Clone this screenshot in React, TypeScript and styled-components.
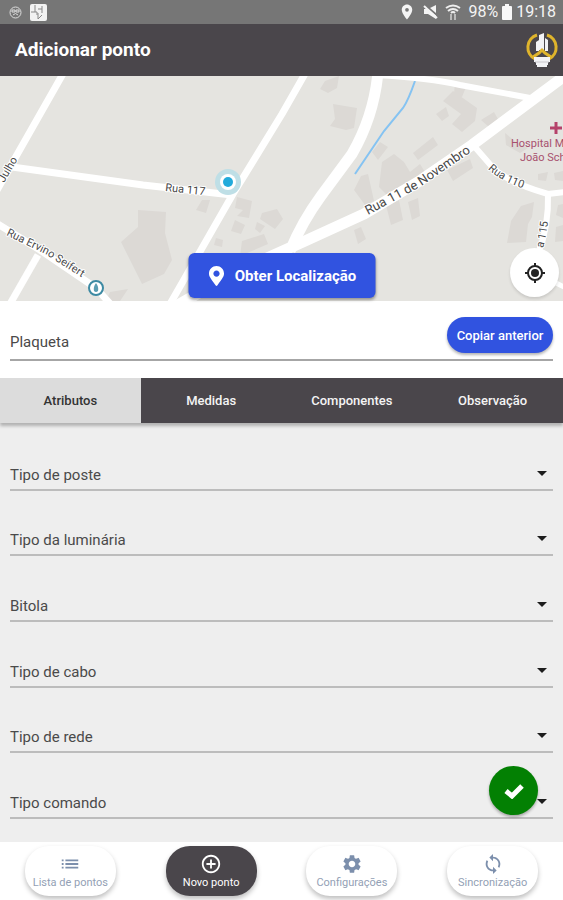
import React, { useState } from 'react';
import styled, { createGlobalStyle } from 'styled-components';
import {
  MdAddCircleOutline,
  MdList,
  MdLocationOn,
  MdSettings,
  MdSync,
} from 'react-icons/md';
import { FaMapMarkerAlt } from 'react-icons/fa';

const GlobalStyle = createGlobalStyle`
  *, *::before, *::after { box-sizing: border-box; }
  body { margin: 0; background: #fff; font-family: Roboto, "Liberation Sans", sans-serif; }
  button, input, select { font-family: inherit; }
`;

const Screen = styled.div`
  display: flex;
  flex-direction: column;
  min-height: 100vh;
`;

const StatusBar = styled.div`
  display: flex;
  align-items: center;
  justify-content: space-between;
  height: 24px;
  padding: 0 7px 0 9px;
  background: #767676;
  color: #f4f4f4;
`;

const StatusGroup = styled.div<{ $gap: number }>`
  display: flex;
  align-items: center;
  gap: ${(p) => p.$gap}px;
`;

const StatusText = styled.span`
  font-size: 16px;
  line-height: 24px;
`;

const Clock = styled.span`
  display: flex;
  align-items: center;
  gap: 4px;
`;

const Header = styled.header`
  display: flex;
  align-items: center;
  justify-content: space-between;
  height: 52px;
  padding: 0 4px 0 15px;
  background: #4a464b;
`;

const Title = styled.h1`
  margin: 0;
  color: #fff;
  font-size: 19px;
  font-weight: 700;
  line-height: 24px;
`;

const MapArea = styled.section`
  position: relative;
  height: 225px;
  background: #e5e4e0;
`;

const MapDrawing = styled.svg`
  display: block;
  width: 100%;
  height: 100%;
`;

const LocateButton = styled.button`
  position: absolute;
  left: 50%;
  bottom: 3px;
  transform: translateX(-50%);
  display: flex;
  align-items: center;
  justify-content: center;
  gap: 8px;
  width: 187px;
  height: 45px;
  padding: 0;
  border: 0;
  border-radius: 6px;
  background: #3153e0;
  color: #fff;
  font-size: 15px;
  font-weight: 700;
  white-space: nowrap;
  box-shadow: 0 2px 3px rgba(0, 0, 0, 0.35);
`;

const RoundButton = styled.button<{ $tone: 'light' | 'green' }>`
  position: absolute;
  display: flex;
  align-items: center;
  justify-content: center;
  width: 49px;
  height: 49px;
  padding: 0;
  border: 0;
  border-radius: 50%;
  background: ${(p) => (p.$tone === 'green' ? '#038003' : '#fff')};
  color: ${(p) => (p.$tone === 'green' ? '#fff' : '#222')};
  right: ${(p) => (p.$tone === 'green' ? 25 : 4)}px;
  bottom: ${(p) => (p.$tone === 'green' ? 27 : 4)}px;
  box-shadow: 0 2px 3px rgba(0, 0, 0, ${(p) => (p.$tone === 'green' ? 0.3 : 0.12)});
`;

const PlateSection = styled.section`
  display: grid;
  height: 77px;
  padding: 0 10px 17px;
  background: #fff;
`;

const PlateInput = styled.input`
  grid-area: 1 / 1;
  width: 100%;
  padding: 22px 120px 0 0;
  border: 0;
  border-bottom: 2px solid #a6a6a6;
  border-radius: 0;
  outline: 0;
  background: transparent;
  color: #444;
  font-size: 15px;
`;

const FieldLabel = styled.label<{ $filled: boolean }>`
  grid-area: 1 / 1;
  align-self: end;
  justify-self: start;
  margin-bottom: ${(p) => (p.$filled ? 28 : 4)}px;
  color: #4a4a4a;
  font-size: ${(p) => (p.$filled ? 12 : 15)}px;
  line-height: 20px;
  pointer-events: none;
`;

const PlateLabel = styled(FieldLabel)`
  margin-bottom: ${(p) => (p.$filled ? 28 : 9)}px;
`;

const CopyButton = styled.button`
  grid-area: 1 / 1;
  align-self: end;
  justify-self: end;
  width: 106px;
  height: 36px;
  margin-bottom: 8px;
  padding: 0;
  border: 0;
  border-radius: 18px;
  background: #3153e0;
  color: #fff;
  font-size: 13px;
  font-weight: 500;
  white-space: nowrap;
  box-shadow: 0 2px 3px rgba(0, 0, 0, 0.3);
`;

const TabBar = styled.div`
  position: relative;
  z-index: 1;
  display: grid;
  grid-template-columns: repeat(4, 1fr);
  height: 45px;
  background: #4a464b;
  box-shadow: 0 3px 3px rgba(0, 0, 0, 0.25);
`;

const Tab = styled.button<{ $active: boolean }>`
  padding: 0;
  border: 0;
  background: ${(p) => (p.$active ? '#dcdcdc' : 'transparent')};
  color: ${(p) => (p.$active ? '#333' : '#f4f4f4')};
  font-size: 13px;
  font-weight: 500;
`;

const Panel = styled.main`
  position: relative;
  display: flex;
  flex: 1;
  flex-direction: column;
  padding: 2px 10px 23px;
  background: #eee;
`;

const Field = styled.div`
  display: grid;
  flex: 1;
  min-height: 56px;
  border-bottom: 2px solid #bcbcbc;
`;

const Select = styled.select`
  grid-area: 1 / 1;
  width: 100%;
  padding: 30px 24px 0 0;
  border: 0;
  outline: 0;
  appearance: none;
  background: transparent;
  color: #444;
  font-size: 15px;
`;

const Caret = styled.svg`
  grid-area: 1 / 1;
  align-self: end;
  justify-self: end;
  width: 10px;
  height: 5px;
  margin: 0 6px 13px 0;
  pointer-events: none;
`;

const NavBar = styled.nav`
  display: grid;
  grid-template-columns: repeat(4, 1fr);
  justify-items: center;
  height: 58px;
  padding-top: 4px;
  background: #fff;
`;

const NavButton = styled.button<{ $active: boolean }>`
  display: flex;
  flex-direction: column;
  align-items: center;
  width: 91px;
  height: 50px;
  padding: 7px 0 0;
  border: 0;
  border-radius: 24px;
  background: ${(p) => (p.$active ? '#4a464b' : '#fff')};
  color: ${(p) => (p.$active ? '#fff' : '#7c8fac')};
  box-shadow: 0 3px 5px rgba(0, 0, 0, 0.25);
`;

const NavLabel = styled.span<{ $active: boolean }>`
  color: ${(p) => (p.$active ? '#fff' : '#939fb5')};
  font-size: 11px;
  line-height: 16px;
  white-space: nowrap;
`;

const roads: { d: string; w: number }[] = [
  { d: 'M64 -4 L14 84 L-4 116', w: 7 },
  { d: 'M12 91 L143 109 L232 119', w: 7 },
  { d: 'M306 -4 L282 38 L233 118 L170 228', w: 7 },
  { d: 'M-4 147 L40 174 L96 212 L114 232', w: 7 },
  { d: 'M38 179 L10 228', w: 7 },
  { d: 'M378 -4 Q374 40 352 78 L321 120 Q302 146 290 175', w: 11 },
  { d: 'M570 -4 L472 69 L418 106 L364 138 L305 165 L236 196 L176 230', w: 11 },
  { d: 'M376 -1 Q430 2 460 9 L530 22', w: 6 },
  { d: 'M474 70 L494 93 Q510 107 548 118 L566 116', w: 6 },
  { d: 'M548 118 Q549 150 538 178', w: 6 },
  { d: 'M556 207 L566 212', w: 5 },
];

const buildings =
  'M138 134 L166 136 L165 157 L172 184 L164 198 L142 208 L121 166 L138 151Z ' +
  'M202 124 L210 124 L206 137 L196 134Z M237 121 L252 125 L249 142 L237 140 L243 134 L235 132Z ' +
  'M235 144 L245 149 L241 158 L231 155Z M262 137 L277 133 L283 143 L275 153 L260 143Z M257 146 L265 150 L260 157 L255 153Z ' +
  'M242 165 L264 158 L268 168 L240 180Z M216 162 L223 164 L222 171 L214 169Z M110 216 L128 213 L120 225 L106 225Z ' +
  'M325 5 L339 0 L337 12 L328 17 L320 13Z M333 28 L357 32 L354 52 L346 54 L330 50 L335 43Z ' +
  'M436 38 L446 31 L449 40 L442 45Z M443 25 L453 15 L477 32 L475 45 L462 56 L452 48 L461 38Z M455 7 L466 11 L462 21 L454 18Z ' +
  'M481 44 L494 36 L499 45 L489 51Z M413 77 L433 61 L438 69 L418 84Z M372 76 L380 66 L388 71 L378 84Z ' +
  'M382 86 L394 78 L404 86 L410 96 L420 88 L425 96 L389 121 L379 111Z M361 100 L368 98 L374 125 L365 129 L354 114Z ' +
  'M447 94 L470 83 L473 92 L453 105Z M386 129 L399 124 L403 144 L391 149Z M408 126 L418 122 L420 140 L412 144Z M354 154 L361 151 L366 163 L358 168Z ' +
  'M505 57 L516 66 L528 72 L520 77 L506 69Z M538 98 L548 96 L546 105 L538 104Z M554 97 L563 95 L563 105 L555 104Z ' +
  'M521 130 L534 126 L532 141 L528 148 L526 166 L507 167 L511 145Z M558 129 L563 128 L563 142 L556 139Z M556 151 L563 149 L563 165 L555 166Z';

function StreetMap() {
  return (
    <MapDrawing viewBox="0 0 563 225" preserveAspectRatio="xMidYMid slice" role="img" aria-label="Mapa">
      <path d={buildings} fill="#dcd9d5" />
      <path d="M415 5 Q408 25 403 32 L384 55 L355 98" fill="none" stroke="#85c3f2" strokeWidth="2" />
      {roads.map((r) => (
        <path key={r.d} d={r.d} fill="none" stroke="#fff" strokeWidth={r.w} strokeLinejoin="round" />
      ))}
      <defs>
        <path id="r117" d="M165 115 L230 122" />
        <path id="r11" d="M368 139 L420 111 L480 70" />
        <path id="rErvino" d="M6 159 L45 178 L100 213" />
        <path id="r110" d="M488 93 Q502 107 535 116" />
        <path id="r115" d="M543 172 Q548 155 549 130" />
        <path id="rJulho" d="M4 107 L24 73" />
      </defs>
      <g fill="#484848" fontSize="11" stroke="#fff" strokeWidth="2" paintOrder="stroke" strokeLinejoin="round">
        <text><textPath href="#r117">Rua 117</textPath></text>
        <text fontSize="13"><textPath href="#r11">Rua 11 de Novembro</textPath></text>
        <text><textPath href="#rErvino">Rua Ervino Seifert</textPath></text>
        <text><textPath href="#r110">Rua 110</textPath></text>
        <text><textPath href="#r115">a 115</textPath></text>
        <text><textPath href="#rJulho">Julho</textPath></text>
      </g>
      <circle cx="228" cy="106" r="13" fill="#bfdfe6" />
      <circle cx="228" cy="106" r="8" fill="#fff" />
      <circle cx="228" cy="106" r="5" fill="#22abdb" />
      <circle cx="96" cy="212" r="7" fill="#fff" stroke="#3d8aa3" strokeWidth="2" />
      <path d="M96 207 Q93 211 94 215 Q96 217 98 215 Q99 211 96 207Z" fill="#5b9db2" />
      <path d="M550 52 H562 M556 46 V58" stroke="#b5426a" strokeWidth="3" />
      <g fill="#a8506e" fontSize="11">
        <text x="511" y="71">Hospital M</text>
        <text x="520" y="85">João Sch</text>
      </g>
    </MapDrawing>
  );
}

function Logo() {
  return (
    <svg width="34" height="38" viewBox="0 0 34 38" aria-hidden="true">
      <path d="M12 4 A13 13 0 0 0 10 28 M22 4 A13 13 0 0 1 24 28" fill="none" stroke="#dfb42c" strokeWidth="3" />
      <path d="M11 20 V11 L14 9 V20Z M14 19 V4 L19 2 V19Z M20 20 V7 L23 9 V20Z" fill="#f3f3f6" />
      <path d="M8 26 L14 22 L17 19 L20 22 L26 26" fill="none" stroke="#dfb42c" strokeWidth="3" />
      <path d="M9 26 H25 V31 H23 V34 H22 V36 H12 V34 H11 V31 H9Z" fill="#f3f3f6" />
      <path d="M10 31 H24" stroke="#c9c6cc" />
    </svg>
  );
}

function StatusIcons() {
  return (
    <StatusGroup $gap={8}>
      <svg width="13" height="13" viewBox="0 0 13 13" fill="none" stroke="#ddd" aria-hidden="true">
        <circle cx="6.5" cy="6.5" r="5.5" />
        <path d="M3 4 H6 V6 H3Z M7 4 H10 V6 H7Z M4 9 Q6.5 6 9 9" />
      </svg>
      <svg width="17" height="17" viewBox="0 0 17 17" aria-hidden="true">
        <rect width="17" height="17" rx="2" fill="#f2f2f2" />
        <path d="M5 1 V8 M1 8 H7 M8 5 H12 M12 2 V9 M7 11 V8 M8 9 V15 L12 11" fill="none" stroke="#888" />
      </svg>
    </StatusGroup>
  );
}

function MutedIcon() {
  return (
    <svg width="15" height="16" viewBox="0 0 15 16" aria-hidden="true">
      <path d="M1 5 H5 L13 1 V15 L5 10 H1Z" fill="#f4f4f4" />
      <path d="M2 1 L15 12" stroke="#767676" strokeWidth="2" />
      <path d="M1 2 L14 14" stroke="#f4f4f4" strokeWidth="2" />
    </svg>
  );
}

function WifiIcon() {
  return (
    <svg width="16" height="17" viewBox="0 0 16 17" fill="none" stroke="#eee" strokeWidth="2" aria-hidden="true">
      <path d="M1 4 Q8 -1 15 4 M3 7 Q8 3 13 7 M6 9 Q8 7 10 9" />
      <path d="M6 10 V16 M10 10 V16" stroke="#bbb" />
    </svg>
  );
}

function BatteryIcon() {
  return (
    <svg width="10" height="16" viewBox="0 0 10 16" aria-hidden="true">
      <path d="M3 0 H7 V2 H9 Q10 2 10 3 V15 Q10 16 9 16 H1 Q0 16 0 15 V3 Q0 2 1 2 H3Z" fill="#f8f8f8" />
    </svg>
  );
}

function TargetIcon() {
  return (
    <svg width="20" height="20" viewBox="0 0 20 20" fill="none" stroke="#222" strokeWidth="2" aria-hidden="true">
      <circle cx="10" cy="10" r="7" />
      <circle cx="10" cy="10" r="4" fill="#222" stroke="none" />
      <path d="M10 0 V3 M10 17 V20 M0 10 H3 M17 10 H20" />
    </svg>
  );
}

function CheckIcon() {
  return (
    <svg width="20" height="16" viewBox="0 0 20 16" fill="none" aria-hidden="true">
      <path d="M2 8 L8 13 L18 3" stroke="#fff" strokeWidth="5" />
    </svg>
  );
}

const tabs = ['Atributos', 'Medidas', 'Componentes', 'Observação'];

const fields = [
  { label: 'Tipo de poste', options: ['Concreto', 'Madeira'] },
  { label: 'Tipo da luminária', options: ['Aberta', 'Fechada'] },
  { label: 'Bitola', options: ['10 mm', '16 mm'] },
  { label: 'Tipo de cabo', options: ['Cobre', 'Alumínio'] },
  { label: 'Tipo de rede', options: ['Aérea', 'Subterrânea'] },
  { label: 'Tipo comando', options: ['Individual', 'Grupo'] },
];

const navItems = [
  { label: 'Lista de pontos', icon: <MdList size={22} /> },
  { label: 'Novo ponto', icon: <MdAddCircleOutline size={22} stroke="currentColor" /> },
  { label: 'Configurações', icon: <MdSettings size={22} /> },
  { label: 'Sincronização', icon: <MdSync size={22} /> },
];

function SelectField({ label, options }: { label: string; options: string[] }) {
  const [value, setValue] = useState('');
  const id = label.toLowerCase().replace(/ /g, '-');
  return (
    <Field>
      <Select id={id} value={value} onChange={(e) => setValue(e.target.value)}>
        <option value="" />
        {options.map((o) => (
          <option key={o}>{o}</option>
        ))}
      </Select>
      <FieldLabel htmlFor={id} $filled={value !== ''}>{label}</FieldLabel>
      <Caret viewBox="0 0 10 5" aria-hidden="true">
        <path d="M0 0 H10 L5 5Z" fill="#1c1c1c" />
      </Caret>
    </Field>
  );
}

export default function App() {
  const [tab, setTab] = useState(0);
  const [nav, setNav] = useState(1);
  const [plate, setPlate] = useState('');

  return (
    <Screen>
      <GlobalStyle />
      <StatusBar>
        <StatusIcons />
        <StatusGroup $gap={7}>
          <MdLocationOn size={18} />
          <MutedIcon />
          <WifiIcon />
          <Clock>
            <StatusText>98%</StatusText>
            <BatteryIcon />
            <StatusText>19:18</StatusText>
          </Clock>
        </StatusGroup>
      </StatusBar>

      <Header>
        <Title>Adicionar ponto</Title>
        <Logo />
      </Header>

      <MapArea>
        <StreetMap />
        <LocateButton type="button">
          <FaMapMarkerAlt size={20} />
          Obter Localização
        </LocateButton>
        <RoundButton type="button" $tone="light" aria-label="Minha posição">
          <TargetIcon />
        </RoundButton>
      </MapArea>

      <PlateSection>
        <PlateInput id="plaqueta" value={plate} onChange={(e) => setPlate(e.target.value)} />
        <PlateLabel htmlFor="plaqueta" $filled={plate !== ''}>Plaqueta</PlateLabel>
        <CopyButton type="button">Copiar anterior</CopyButton>
      </PlateSection>

      <TabBar role="tablist">
        {tabs.map((t, i) => (
          <Tab key={t} type="button" role="tab" aria-selected={i === tab} $active={i === tab} onClick={() => setTab(i)}>
            {t}
          </Tab>
        ))}
      </TabBar>

      <Panel>
        {fields.map((f) => (
          <SelectField key={f.label} label={f.label} options={f.options} />
        ))}
        <RoundButton type="button" $tone="green" aria-label="Salvar">
          <CheckIcon />
        </RoundButton>
      </Panel>

      <NavBar>
        {navItems.map((n, i) => (
          <NavButton key={n.label} type="button" $active={i === nav} onClick={() => setNav(i)}>
            {n.icon}
            <NavLabel $active={i === nav}>{n.label}</NavLabel>
          </NavButton>
        ))}
      </NavBar>
    </Screen>
  );
}
